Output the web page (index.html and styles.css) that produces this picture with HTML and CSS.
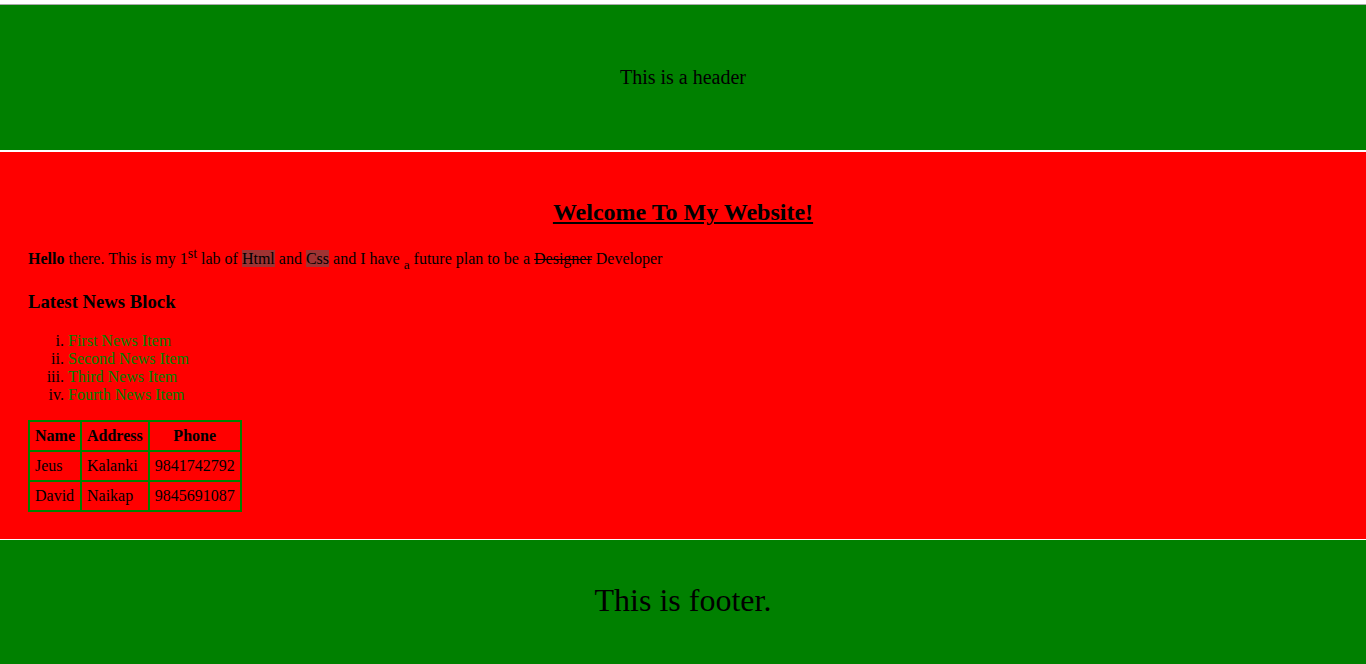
FILE: index.html
```html
<!DOCTYPE html>
<html>
<head>
<meta charset="utf-8">
<title>Lab</title>
<link rel="stylesheet" href="styles.css">
</head>
<body>
<div class="topline"></div>
<header class="header">This is a header</header>
<main class="content">
  <h2 class="title">Welcome To My Website!</h2>
  <p class="intro"><b>Hello</b> there. This is my 1<sup>st</sup> lab of <span class="mark">Html</span> and <span class="mark">Css</span> and I have <sub>a</sub> future plan to be a <del>Designer</del> Developer</p>
  <h3 class="news-title">Latest News Block</h3>
  <ol class="news" type="i">
    <li>First News Item</li>
    <li>Second News Item</li>
    <li>Third News Item</li>
    <li>Fourth News Item</li>
  </ol>
  <table class="people">
    <tr><th>Name</th><th>Address</th><th>Phone</th></tr>
    <tr><td>Jeus</td><td>Kalanki</td><td>9841742792</td></tr>
    <tr><td>David</td><td>Naikap</td><td>9845691087</td></tr>
  </table>
</main>
<footer class="footer">This is footer.</footer>
</body>
</html>
```
FILE: styles.css
```css
html, body {
  margin: 0;
  padding: 0;
  background: #ffffff;
  font-family: "Liberation Serif", "Times New Roman", serif;
  font-size: 16px;
  color: #000;
}
.topline {
  height: 4px;
  border-bottom: 1px solid #a9a9a9;
}
.header {
  background: #008000;
  height: 145px;
  display: flex;
  align-items: center;
  justify-content: center;
  font-size: 20px;
}
.content {
  margin-top: 2px;
  background: #ff0000;
  padding: 27px 28px 27px 28px;
  display: flow-root;
}
.title {
  text-align: center;
  text-decoration: underline;
  font-size: 24px;
  margin: 20px 0 20px;
}
.intro {
  margin: 16px 0;
}
.intro sup {
  font-size: 14px;
}
.mark {
  background: #a03333;
}
.news-title {
  font-size: 18.72px;
  margin: 18.72px 0;
}
.news {
  list-style-type: lower-roman;
  padding-left: 40px;
  margin: 16px 0;
}
.news li {
  color: #008000;
}
.news li::marker {
  color: #000;
}
.people {
  border-collapse: collapse;
  border: 2px solid #008000;
}
.people th, .people td {
  border: 2px solid #008000;
  padding: 5px 5px;
  height: 18px;
}
.footer {
  margin-top: 1px;
  background: #008000;
  height: 124px;
  box-sizing: border-box;
  padding-bottom: 2px;
  display: flex;
  align-items: center;
  justify-content: center;
  font-size: 32px;
}
```
